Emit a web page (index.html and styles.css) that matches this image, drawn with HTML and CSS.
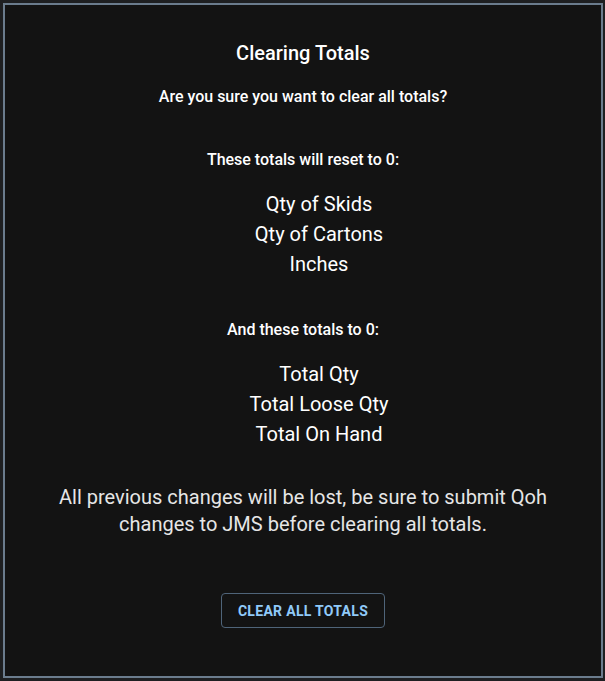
FILE: index.html
```html
<!DOCTYPE html>
<html>
<head>
<meta charset="utf-8">
<link rel="stylesheet" href="styles.css">
</head>
<body>
<div class="dialog">
  <h2 class="title">Clearing Totals</h2>
  <p class="sub sub-first">Are you sure you want to clear all totals?</p>
  <p class="sub sub-gap">These totals will reset to 0:</p>
  <ul class="list">
    <li>Qty of Skids</li>
    <li>Qty of Cartons</li>
    <li>Inches</li>
  </ul>
  <p class="sub sub-gap2">And these totals to 0:</p>
  <ul class="list">
    <li>Total Qty</li>
    <li>Total Loose Qty</li>
    <li>Total On Hand</li>
  </ul>
  <p class="warning">All previous changes will be lost, be sure to submit Qoh changes to JMS before clearing all totals.</p>
  <button class="btn">Clear All Totals</button>
</div>
</body>
</html>
```
FILE: styles.css
```css
html, body {
  margin: 0;
  padding: 0;
  background: #1e1f21;
  height: 100%;
}
body {
  font-family: Roboto, "Liberation Sans", sans-serif;
  color: #fff;
  padding: 3px;
  box-sizing: border-box;
}
.dialog {
  box-sizing: border-box;
  width: 600px;
  height: 675px;
  border: 2px solid #6b7c8d;
  background: #131313;
  display: flex;
  flex-direction: column;
  align-items: center;
  padding-top: 36px;
}
.title {
  margin: 0;
  font-size: 20px;
  line-height: 24px;
  font-weight: 500;
}
.sub {
  margin: 0;
  font-size: 16px;
  line-height: 20px;
  font-weight: 500;
}
.sub-first { margin-top: 22px; }
.sub-gap { margin-top: 43px; }
.sub-gap2 { margin-top: 41px; }
.list {
  list-style: none;
  margin: 19px 0 0;
  padding: 0 0 0 32px;
  text-align: center;
  font-size: 20px;
  line-height: 30px;
  font-weight: 400;
}
.warning {
  margin: 35px 0 0;
  width: 540px;
  text-align: center;
  font-size: 20px;
  line-height: 27px;
  font-weight: 400;
  color: #e6e6e6;
}
.btn {
  margin-top: 55px;
  height: 35px;
  width: 164px;
  background: transparent;
  border: 1px solid #4f6479;
  border-radius: 4px;
  color: #90caf9;
  font-family: Roboto, "Liberation Sans", sans-serif;
  font-size: 14px;
  font-weight: 700;
  letter-spacing: 0.3px;
  text-transform: uppercase;
  padding: 0;
}
```
